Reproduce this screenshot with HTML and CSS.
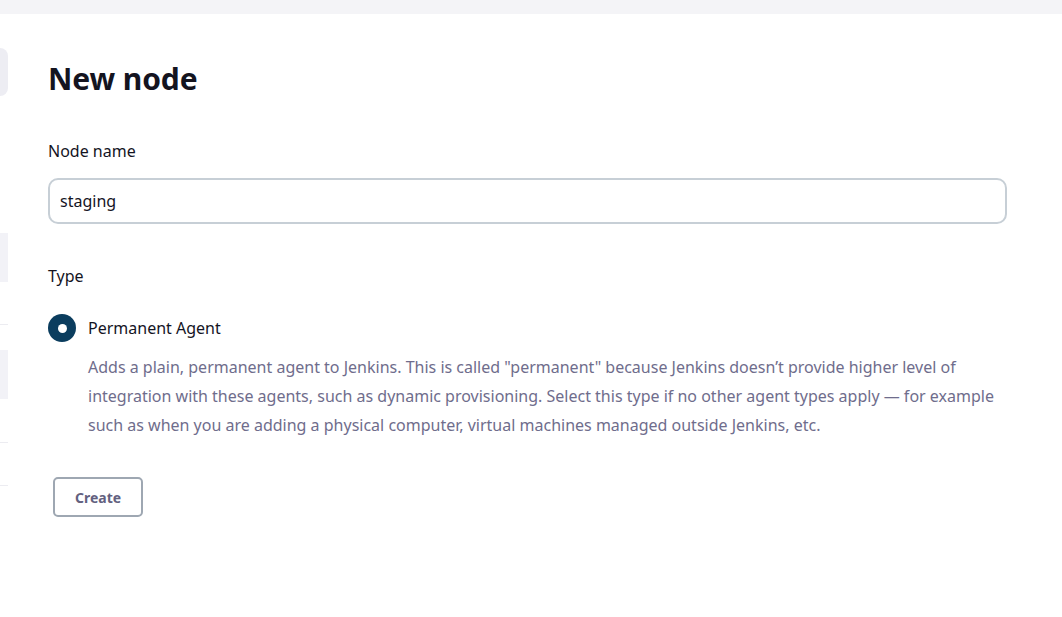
FILE: index.html
```html
<!DOCTYPE html>
<html lang="en">
<head>
<meta charset="utf-8">
<title>New node</title>
<link rel="stylesheet" href="styles.css">
</head>
<body>
<div class="topbar"></div>
<div class="page">
  <aside class="side">
    <div class="side-pill"></div>
    <div class="side-block side-block-a"></div>
    <div class="side-line side-line-a"></div>
    <div class="side-block side-block-b"></div>
    <div class="side-line side-line-b"></div>
    <div class="side-line side-line-c"></div>
  </aside>
  <main class="main">
    <h1 class="title">New node</h1>
    <label class="label" for="name">Node name</label>
    <input class="input" id="name" type="text" value="staging">
    <div class="label type-label">Type</div>
    <div class="radio-row">
      <span class="radio"><span class="radio-dot"></span></span>
      <span class="radio-label">Permanent Agent</span>
    </div>
    <p class="desc">Adds a plain, permanent agent to Jenkins. This is called "permanent" because Jenkins doesn’t provide higher level of integration with these agents, such as dynamic provisioning. Select this type if no other agent types apply — for example such as when you are adding a physical computer, virtual machines managed outside Jenkins, etc.</p>
    <button class="btn" type="button">Create</button>
  </main>
</div>
</body>
</html>
```

FILE: styles.css
```css
* { box-sizing: border-box; }
html, body { margin: 0; padding: 0; background: #ffffff; }
body {
  font-family: "Noto Sans", "Liberation Sans", sans-serif;
  color: #14141f;
  width: 1062px;
  height: 617px;
  overflow: hidden;
}
.topbar { height: 14px; background: #f4f4f7; }
.page { display: flex; }
.side { width: 8px; flex: none; display: flex; flex-direction: column; }
.side-pill { height: 48px; margin-top: 34px; background: #ededf3; border-radius: 0 9px 9px 0; }
.side-block { background: #f2f2f7; height: 49px; }
.side-block-a { margin-top: 137px; }
.side-line { height: 1px; background: #ececf1; }
.side-line-a { margin-top: 42px; }
.side-block-b { margin-top: 25px; }
.side-line-b { margin-top: 43px; }
.side-line-c { margin-top: 42px; }
.main { flex: none; width: 960px; margin-left: 40px; padding-top: 45px; display: flex; flex-direction: column; align-items: flex-start; }
.title { font-size: 30px; font-weight: 700; margin: 0; line-height: 40px; letter-spacing: -0.1px; }
.label { font-size: 16px; font-weight: 400; line-height: 24px; margin-top: 40px; display: block; color: #14141f; }
.input {
  margin-top: 15px; width: 959px; height: 46px; border: 2px solid #c7cfd6; border-radius: 10px;
  font: inherit; font-size: 16px; padding: 0 10px; color: #14141f; outline: none;
}
.type-label { margin-top: 40px; }
.radio-row { display: flex; align-items: center; gap: 12px; margin-top: 26px; }
.radio { width: 28px; height: 28px; border-radius: 50%; background: #0b3d5e; display: flex; align-items: center; justify-content: center; }
.radio-dot { width: 9px; height: 9px; border-radius: 50%; background: #fff; }
.radio-label { font-size: 16px; font-weight: 400; line-height: 24px; }
.desc { margin: 11px 0 0 40px; width: 925px; font-size: 16px; line-height: 29px; color: #6f6d8c; }
.btn {
  margin: 37px 0 0 5px; width: 90px; height: 40px; border: 2px solid #9ea7b2; border-radius: 5px; background: #fff;
  font: inherit; font-size: 14px; font-weight: 700; color: #63617f; cursor: pointer;
}
```
